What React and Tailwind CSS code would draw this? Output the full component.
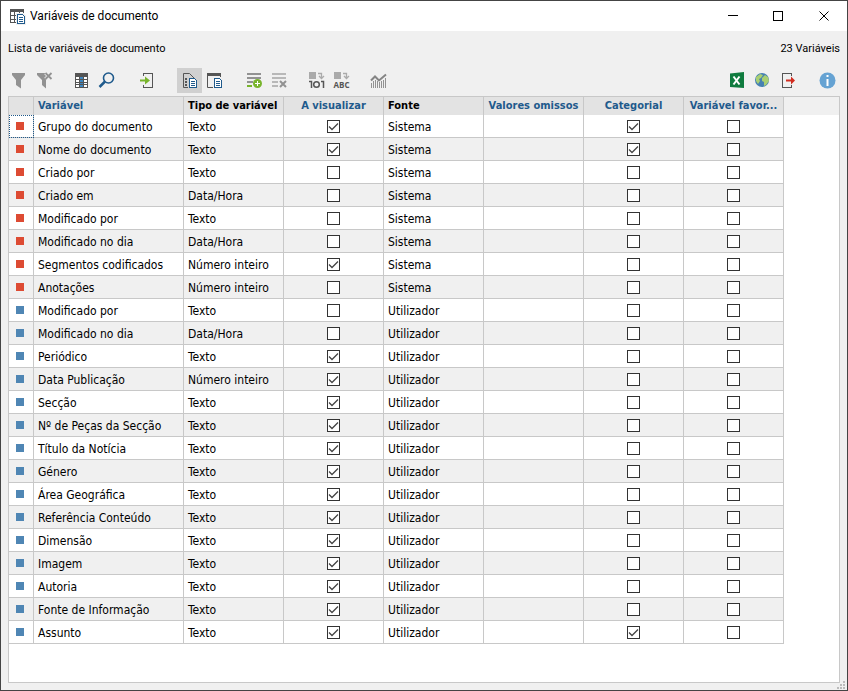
const variables = [
  ["Grupo do documento", "Texto", true, "Sistema", true],
  ["Nome do documento", "Texto", true, "Sistema", true],
  ["Criado por", "Texto", false, "Sistema", false],
  ["Criado em", "Data/Hora", false, "Sistema", false],
  ["Modificado por", "Texto", false, "Sistema", false],
  ["Modificado no dia", "Data/Hora", false, "Sistema", false],
  ["Segmentos codificados", "Número inteiro", true, "Sistema", false],
  ["Anotações", "Número inteiro", false, "Sistema", false],
  ["Modificado por", "Texto", false, "Utilizador", false],
  ["Modificado no dia", "Data/Hora", false, "Utilizador", false],
  ["Periódico", "Texto", true, "Utilizador", false],
  ["Data Publicação", "Número inteiro", true, "Utilizador", false],
  ["Secção", "Texto", true, "Utilizador", false],
  ["Nº de Peças da Secção", "Texto", true, "Utilizador", false],
  ["Título da Notícia", "Texto", true, "Utilizador", false],
  ["Género", "Texto", true, "Utilizador", false],
  ["Área Geográfica", "Texto", true, "Utilizador", false],
  ["Referência Conteúdo", "Texto", true, "Utilizador", false],
  ["Dimensão", "Texto", true, "Utilizador", false],
  ["Imagem", "Texto", true, "Utilizador", false],
  ["Autoria", "Texto", true, "Utilizador", false],
  ["Fonte de Informação", "Texto", true, "Utilizador", false],
  ["Assunto", "Texto", true, "Utilizador", true],
];

function Icon({ children, className = "size-[17px]" }) {
  return (
    <svg viewBox="0 0 17 17" className={className} fill="none" aria-hidden="true">
      {children}
    </svg>
  );
}

function ToolButton({ label, active, children }) {
  return (
    <button
      type="button"
      aria-label={label}
      className={
        active
          ? "flex size-[25px] items-center justify-center bg-[#d0d0d0]"
          : "flex size-[25px] items-center justify-center"
      }
    >
      <Icon>{children}</Icon>
    </button>
  );
}

// small blue sheet that sits in the corner of several icons
function Sheet() {
  return (
    <g shapeRendering="crispEdges">
      <path d="M7 5h7l3 3v9H7z" fill="#f0f0f0" />
      <path d="M8.5 6.5h5l2 2v7h-7z" fill="#fff" stroke="#1f5a8c" />
      <path d="M10 9.5h4M10 11.5h4M10 13.5h4" stroke="#1f5a8c" />
    </g>
  );
}

function Check({ label, defaultChecked }) {
  return (
    <span className="relative mx-auto block size-[13px]">
      <input
        type="checkbox"
        aria-label={label}
        defaultChecked={defaultChecked}
        className="peer block size-[13px] appearance-none border border-[#333] bg-white"
      />
      <svg
        viewBox="0 0 13 13"
        className="pointer-events-none absolute inset-0 hidden size-[13px] peer-checked:block"
        fill="none"
      >
        <path d="M2 6.5l3 3 6-6" stroke="#444" strokeWidth="1.3" />
      </svg>
    </span>
  );
}

function TitleBar() {
  return (
    <header className="flex h-[30px] items-center bg-white pl-2 text-black">
      <Icon className="mr-1 size-[17px]">
        <g shapeRendering="crispEdges">
          <path d="M1 1h14v3H1z" fill="#555" />
          <path d="M1.5 4v11M5.5 4v11M10.5 4v3M14.5 4v3M1 7.5h7M1 11.5h7M1 14.5h7" stroke="#555" />
        </g>
        <Sheet />
      </Icon>
      <h1 className="flex-1 font-[Roboto,sans-serif] text-[12px]">Variáveis de documento</h1>
      <button type="button" aria-label="Minimizar" className="flex h-full w-[46px] items-center justify-center">
        <svg viewBox="0 0 11 11" className="size-[11px]" stroke="#000" shapeRendering="crispEdges">
          <path d="M1 4.500h10" />
        </svg>
      </button>
      <button type="button" aria-label="Maximizar" className="flex h-full w-[46px] items-center justify-center">
        <svg viewBox="0 0 11 11" className="size-[11px]" fill="none" stroke="#000" shapeRendering="crispEdges">
          <path d="M.5.5h9v9h-9z" />
        </svg>
      </button>
      <button type="button" aria-label="Fechar" className="flex h-full w-[46px] items-center justify-center">
        <svg viewBox="0 0 11 11" className="size-[11px]" stroke="#000">
          <path d="M.5.5l9 9M9.500.5l-9 9" />
        </svg>
      </button>
    </header>
  );
}

function Toolbar() {
  return (
    <div className="-ml-px flex h-[25px]">
      <ToolButton label="Filtrar">
        <path d="M1 1h13v2L10 8v8.500L5 13V8L1 3z" fill="#929292" />
      </ToolButton>
      <ToolButton label="Remover filtro">
        <path d="M1 1h9l2 5-2 2v8.500L6 13V8L1 3z" fill="#929292" />
        <path d="M9.500 1l6 6M15.500 1l-6 6" stroke="#f0f0f0" strokeWidth="3.500" />
        <path d="M9.500 1l6 6M15.500 1l-6 6" stroke="#929292" strokeWidth="1.800" />
      </ToolButton>

      <div className="ml-3 flex">
        <ToolButton label="Tabela">
          <g shapeRendering="crispEdges">
            <path d="M2 1h13v15H2z" fill="#555" />
            <path d="M3 5h3v2H3zM3 8h3v2H3zM3 11h3v1H3zM3 13h3v2H3zM11 5h3v2h-3zM11 8h3v2h-3zM11 11h3v1h-3zM11 13h3v2h-3z" fill="#fff" />
            <path d="M7 5h3v2H7zM7 8h3v2H7zM7 11h3v1H7zM7 13h3v2H7z" fill="#3f87c0" />
          </g>
        </ToolButton>
        <ToolButton label="Procurar">
          <circle cx="10.500" cy="6" r="5" stroke="#1f5a8c" strokeWidth="1.600" />
          <path d="M7 9.500L1.500 15" stroke="#1f5a8c" strokeWidth="2.500" />
        </ToolButton>
      </div>

      <div className="ml-[15px] flex">
        <ToolButton label="Importar">
          <path d="M5 1.500h9.500v14H5M5.500 1v3M5.500 13v3" stroke="#555" shapeRendering="crispEdges" />
          <path d="M2 7.500h5V4.500l5 4-5 4v-3H2z" fill="#78b42c" />
        </ToolButton>
      </div>

      <div className="ml-[18px] flex">
        <ToolButton label="Variáveis de documento" active>
          <path d="M7 15.500H2.500v-14h6L13 6" stroke="#555" />
          <path d="M4 6h2v2H4zM4 9h2v2H4zM4 12h2v2H4z" fill="#555" />
          <path d="M8.500 6.500h5l2 2v7h-7z" fill="#fff" stroke="#1f5a8c" shapeRendering="crispEdges" />
          <path d="M10 9.500h4M10 11.500h4M10 13.500h4" stroke="#1f5a8c" />
        </ToolButton>
        <ToolButton label="Dados">
          <path d="M1 1h14v3H1z" fill="#555" />
          <path d="M1.500 4v11.500H8" stroke="#555" />
          <path d="M14.500 4v3" stroke="#555" />
          <Sheet />
        </ToolButton>
      </div>

      <div className="ml-[15px] flex">
        <ToolButton label="Nova variável">
          <path d="M1 1h14v2H1zM1 5h14v2H1z" fill="#929292" />
          <path d="M1 9h6v2H1z" fill="#929292" />
          <path d="M1 13h5v2H1z" fill="#78b42c" />
          <circle cx="11.500" cy="11.500" r="4.500" fill="#78b42c" />
          <path d="M11.500 9v5M9 11.500h5" stroke="#fff" />
        </ToolButton>
        <ToolButton label="Eliminar variável">
          <path d="M1 1h14v2H1zM1 5h14v2H1zM1 9h6v2H1zM1 13h6v2H1z" fill="#b8b8b8" />
          <path d="M9 9l6 6M15 9l-6 6" stroke="#929292" strokeWidth="2" />
        </ToolButton>
      </div>

      <div className="ml-3 flex">
        <ToolButton label="Transformar em números">
          <path d="M1 0h7v7H1z" fill="#aaa" />
          <path d="M10 1.500h3.500V6M11 4l2.500 2.500L16 4" stroke="#aaa" strokeWidth="1.300" />
          <path d="M1 9.500h2.500V16M13 9.500h2.500V16" stroke="#555" strokeWidth="1.500" />
          <circle cx="8.500" cy="12.500" r="2.800" stroke="#555" strokeWidth="1.500" />
        </ToolButton>
        <ToolButton label="Transformar em texto">
          <path d="M1 0h7v7H1z" fill="#aaa" />
          <path d="M10 1.500h3.500V6M11 4l2.500 2.500L16 4" stroke="#aaa" strokeWidth="1.300" />
          <text x="8.500" y="16" textAnchor="middle" className="font-['Open_Sans',sans-serif] text-[8px] font-bold" fill="#555">
            ABC
          </text>
        </ToolButton>
      </div>

      <div className="ml-3 flex">
        <ToolButton label="Estatísticas">
          <path d="M1 8.500l4-4 4 4 7-6" stroke="#858585" strokeWidth="2" />
          <path d="M1.500 11v5M3.500 9v7M5.500 8v8M7.500 9v7M9.500 10v6M11.500 9v7M13.500 8v8M15.500 6v10" stroke="#929292" shapeRendering="crispEdges" />
        </ToolButton>
      </div>

      <div className="ml-auto flex">
        <ToolButton label="Exportar para Excel">
          <path d="M1 1.500L15 0v16L1 15z" fill="#0f7b3e" />
          <path d="M4.500 4.500l6 8M10.500 4.500l-6 8" stroke="#fff" strokeWidth="2" />
        </ToolButton>
        <ToolButton label="Exportar para HTML">
          <circle cx="8" cy="8" r="7" fill="#4681b2" />
          <path d="M2 5l4-3 3 1-2 3-2 1 1 2-2 3-2-3zM8 6l3-3 3 2 1 4-3 4-2 1v-4L8 9z" fill="#a9cf72" />
        </ToolButton>
      </div>
      <div className="ml-px flex">
        <ToolButton label="Sair">
          <path d="M11.500 4V1.500h-9v14h9V13" stroke="#555" shapeRendering="crispEdges" />
          <path d="M6 7.500h5v-3L15 8.500l-4 4v-3H6z" fill="#d12c1f" />
        </ToolButton>
      </div>
      <div className="ml-[14px] flex">
        <ToolButton label="Informação">
          <circle cx="8.500" cy="8.500" r="8" fill="#66a3d3" />
          <path d="M7.500 3h2v2h-2zM7.500 7h2v7h-2z" fill="#fff" />
        </ToolButton>
      </div>
    </div>
  );
}

function VariableTable() {
  const th = "truncate border-r border-[#c8c8c8] bg-[#e3e3e3] px-1 font-bold";
  const td = "truncate border-r border-b border-[#c8c8c8] px-1";

  return (
    <table className="w-[775px] table-fixed border-separate border-spacing-0 text-left text-[12px] leading-[18px]">
      <colgroup>
        <col className="w-[25px]" />
        <col className="w-[150px]" />
        <col span={6} className="w-[100px]" />
      </colgroup>
      <thead>
        <tr className="h-[18px] text-[11px] text-[#1f5a8c]">
          <th className={th} aria-label="Origem" />
          <th className={th}>Variável</th>
          <th className={`${th} text-black`}>Tipo de variável</th>
          <th className={`${th} text-center`}>A visualizar</th>
          <th className={`${th} text-black`}>Fonte</th>
          <th className={`${th} text-center`}>Valores omissos</th>
          <th className={`${th} text-center`}>Categorial</th>
          <th className={`${th} text-center`}>Variável favor...</th>
        </tr>
      </thead>
      <tbody>
        {variables.map(([name, type, visible, source, categorical], i) => (
          <tr key={i} className="h-[23px] odd:bg-white even:bg-[#f0f0f0]">
            <td
              className={
                i === 0
                  ? "border-r border-b border-[#c8c8c8] outline-1 -outline-offset-1 outline-dotted outline-[#1f5a8c]"
                  : "border-r border-b border-[#c8c8c8]"
              }
            >
              <span
                className={
                  source === "Sistema"
                    ? "ml-[7px] block size-2 bg-[#dd4b33]"
                    : "ml-[7px] block size-2 bg-[#4f86b4]"
                }
              />
            </td>
            <td className={`${td} pt-[2px]`}>{name}</td>
            <td className={`${td} pt-[2px]`}>{type}</td>
            <td className={td}>
              <Check label={`A visualizar: ${name}`} defaultChecked={visible} />
            </td>
            <td className={`${td} pt-[2px]`}>{source}</td>
            <td className={td} />
            <td className={td}>
              <Check label={`Categorial: ${name}`} defaultChecked={categorical} />
            </td>
            <td className={td}>
              <Check label={`Variável favorita: ${name}`} />
            </td>
          </tr>
        ))}
      </tbody>
    </table>
  );
}

export default function App() {
  return (
    <div className="relative flex min-h-screen flex-col border border-[#444] bg-[#f0f0f0] font-['DejaVu_Sans_Condensed','DejaVu_Sans',sans-serif] text-black">
      <TitleBar />
      <main className="flex flex-1 flex-col px-[7px] pb-[7px]">
        <div className="flex h-[37px] items-center justify-between font-[Roboto,sans-serif] text-[11px]">
          <p>Lista de variáveis de documento</p>
          <p>23 Variáveis</p>
        </div>
        <Toolbar />
        <div className="mt-[3px] flex-1 border border-[#c8c8c8] bg-white">
          <div className="bg-[linear-gradient(#f0f0f0_18px,transparent_18px)]">
            <VariableTable />
          </div>
        </div>
      </main>
      <svg viewBox="0 0 8 8" className="absolute right-[2px] bottom-[1px] size-2" fill="#bbb" aria-hidden="true">
        <path d="M6 0h2v2H6zM3 3h2v2H3zM6 3h2v2H6zM0 6h2v2H0zM3 6h2v2H3zM6 6h2v2H6z" />
      </svg>
    </div>
  );
}
